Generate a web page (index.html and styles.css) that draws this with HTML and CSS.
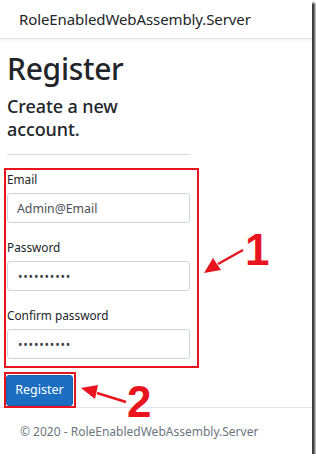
FILE: index.html
```html
<!DOCTYPE html>
<html>
<head>
<meta charset="utf-8">
<link rel="stylesheet" href="styles.css">
</head>
<body>
<div class="frame">
  <header class="navbar"><span class="brand">RoleEnabledWebAssembly.Server</span></header>
  <main class="content">
    <h1 class="title">Register</h1>
    <h4 class="subtitle">Create a new<br>account.</h4>
    <hr class="rule">
    <form class="form">
      <div class="group">
        <label class="label">Email</label>
        <div class="input">Admin@Email</div>
      </div>
      <div class="group">
        <label class="label">Password</label>
        <div class="input dots">••••••••••</div>
      </div>
      <div class="group">
        <label class="label">Confirm password</label>
        <div class="input dots">••••••••••</div>
      </div>
      <button type="button" class="btn">Register</button>
    </form>
  </main>
  <footer class="footer">© 2020 - RoleEnabledWebAssembly.Server</footer>

  <div class="mark mark-fields"></div>
  <div class="mark mark-btn"></div>
  <span class="num num-1">1</span>
  <span class="num num-2">2</span>
  <svg class="arrows" width="312" height="454" viewBox="0 0 312 454">
    <line x1="243" y1="250" x2="218" y2="264" stroke="#e8141e" stroke-width="2.5"/>
    <polygon points="204,273 213,258 221,270" fill="#e8141e"/>
    <line x1="126" y1="402" x2="97" y2="393" stroke="#e8141e" stroke-width="2.5"/>
    <polygon points="81,388 98,385 95,399" fill="#e8141e"/>
  </svg>
</div>
</body>
</html>
```

FILE: styles.css
```css
* { box-sizing: border-box; }
html, body { margin: 0; padding: 0; background: #fff; }
body { font-family: "Noto Sans", "Open Sans", sans-serif; color: #212529; }

.frame {
  position: relative;
  width: 312px;
  height: 454px;
  background: #fff;
  box-shadow: 3px 3px 2px #3a3a3a;
  overflow: hidden;
  display: flex;
  flex-direction: column;
}

.navbar {
  height: 39px;
  flex: none;
  border-bottom: 1px solid #e2e2e8;
  box-shadow: 0 1px 3px rgba(0,0,0,0.06);
  display: flex;
  align-items: center;
  padding-left: 19px;
}
.brand { font-size: 15px; color: #212529; letter-spacing: -0.1px; }

.content { padding: 0 7px; flex: none; }
.title {
  margin: 11px 0 0;
  font-size: 30px;
  font-weight: 500;
  line-height: 38px;
  letter-spacing: -0.3px;
}
.subtitle {
  margin: 7px 0 0;
  font-size: 18px;
  font-weight: 500;
  line-height: 23px;
  letter-spacing: -0.1px;
}
.rule {
  width: 183px;
  margin: 13px 0 0;
  border: 0;
  border-top: 1px solid #dcdcdc;
}

.form { width: 183px; margin-top: 14px; display: flex; flex-direction: column; }
.group { display: flex; flex-direction: column; margin-bottom: 14px; }
.label { font-size: 11.8px; line-height: 20px; margin-bottom: 4px; }
.input {
  height: 30px;
  border: 1px solid #ced4da;
  border-radius: 3px;
  padding: 0 9px;
  display: flex;
  align-items: center;
  font-size: 12.3px;
  color: #495057;
}
.dots { font-size: 12px; letter-spacing: 0.8px; padding-left: 10px; color: #3d4247; }

.btn {
  align-self: flex-start;
  margin-top: 2px;
  margin-left: -1px;
  width: 67px;
  height: 31px;
  background: #1b6ec2;
  border: 1px solid #1861ac;
  border-radius: 3px;
  color: #fff;
  font-family: inherit;
  font-size: 12.5px;
  line-height: 1;
  padding: 0;
}

.footer {
  flex: none;
  margin-top: 1px;
  border-top: 1px solid #e2e2e8;
  padding: 15px 0 0 20px;
  font-size: 12px;
  line-height: 18px;
  color: #6c757d;
}

.mark { position: absolute; border: 2px solid #e8141e; }
.mark-fields { left: 4px; top: 168px; width: 195px; height: 200px; }
.mark-btn { left: 4px; top: 372px; width: 72px; height: 36px; }

.num {
  position: absolute;
  font-family: "Liberation Sans", Arial, sans-serif;
  font-weight: 700;
  color: #e8141e;
  font-size: 44px;
  line-height: 32px;
}
.num-1 { left: 245px; top: 234px; }
.num-2 { left: 127px; top: 386px; }

.arrows { position: absolute; left: 0; top: 0; pointer-events: none; }
```
